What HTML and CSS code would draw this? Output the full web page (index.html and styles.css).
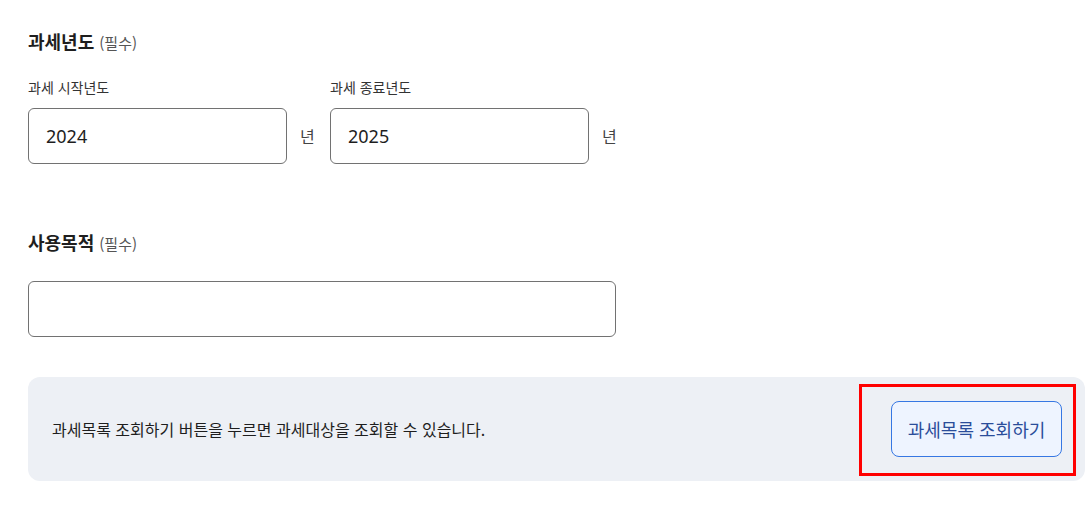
FILE: index.html
```html
<!DOCTYPE html>
<html lang="ko">
<head>
<meta charset="utf-8">
<title>과세년도</title>
<link rel="stylesheet" href="styles.css">
</head>
<body>
<div class="page">
  <section class="sec sec-year">
    <h2 class="title">과세년도 <span class="req">(필수)</span></h2>
    <div class="year-row">
      <div class="field">
        <div class="label">과세 시작년도</div>
        <div class="field-line">
          <div class="input input-year">2024</div>
          <span class="unit">년</span>
        </div>
      </div>
      <div class="field">
        <div class="label">과세 종료년도</div>
        <div class="field-line">
          <div class="input input-year">2025</div>
          <span class="unit">년</span>
        </div>
      </div>
    </div>
  </section>
  <section class="sec sec-purpose">
    <h2 class="title">사용목적 <span class="req">(필수)</span></h2>
    <div class="input input-purpose"></div>
  </section>
  <div class="notice">
    <p class="notice-text">과세목록 조회하기 버튼을 누르면 과세대상을 조회할 수 있습니다.</p>
    <button class="btn">과세목록 조회하기</button>
    <div class="highlight"></div>
  </div>
</div>
</body>
</html>
```
FILE: styles.css
```css
* { box-sizing: border-box; }
html, body { margin: 0; padding: 0; background: #fff; }
body {
  font-family: "Noto Sans CJK KR", "Noto Sans", sans-serif;
  color: #1e1e1e;
}
.page {
  padding: 29px 7px 0 28px;
}
.title {
  margin: 0;
  height: 24px;
  font-size: 18px;
  line-height: 24px;
  font-weight: 700;
  color: #1e1e1e;
}
.req {
  font-size: 15px;
  line-height: 16px;
  font-weight: 400;
  color: #555;
}
.year-row {
  display: flex;
  gap: 15px;
  margin-top: 24px;
}
.label {
  font-size: 14px;
  line-height: 20px;
  color: #333;
  margin-bottom: 11px;
}
.field-line {
  display: flex;
  align-items: center;
  gap: 13px;
}
.input {
  height: 56px;
  border: 1px solid #727272;
  border-radius: 6px;
  background: #fff;
  display: flex;
  align-items: center;
  padding: 0 17px;
  font-family: "Noto Sans", "Noto Sans CJK KR", sans-serif;
  font-size: 18px;
  color: #1e1e1e;
}
.input-year { width: 259px; }
.unit {
  font-size: 16px;
  color: #444;
  width: 15px;
}
.sec-purpose { margin-top: 66px; }
.input-purpose {
  width: 588px;
  margin-top: 27px;
}
.notice {
  position: relative;
  margin-top: 40px;
  height: 104px;
  background: #edf0f5;
  border-radius: 12px;
  display: flex;
  align-items: center;
  justify-content: space-between;
  padding: 0 23px 0 24px;
}
.notice-text {
  margin: 0;
  font-size: 16px;
  line-height: 22px;
  color: #1e1e1e;
}
.btn {
  width: 171px;
  height: 56px;
  border: 1px solid #3677e3;
  border-radius: 8px;
  background: #eef4ff;
  color: #2b4d9a;
  font-family: "Noto Sans CJK KR", sans-serif;
  font-size: 18px;
  padding: 0;
}
.highlight {
  position: absolute;
  top: 7px;
  right: 9px;
  bottom: 5px;
  width: 217px;
  border: 3px solid #ff0000;
  pointer-events: none;
}
```
